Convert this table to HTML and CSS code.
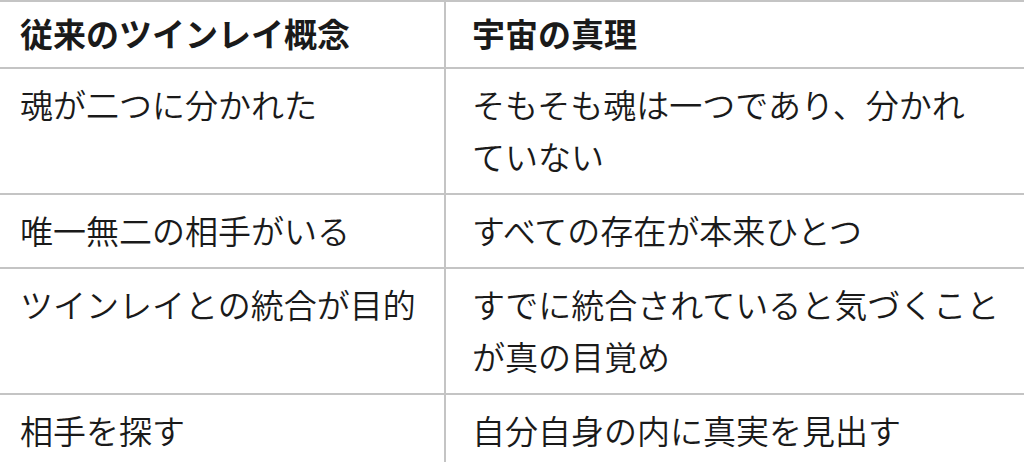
FILE: index.html
```html
<!DOCTYPE html>
<html lang="ja">
<head>
<meta charset="utf-8">
<title>ツインレイ概念</title>
<link rel="stylesheet" href="styles.css">
</head>
<body>
<div class="table">
  <div class="cell head left">従来のツインレイ概念</div>
  <div class="cell head right">宇宙の真理</div>

  <div class="cell left">魂が二つに分かれた</div>
  <div class="cell right">そもそも魂は一つであり、分かれ<br>ていない</div>

  <div class="cell left">唯一無二の相手がいる</div>
  <div class="cell right">すべての存在が本来ひとつ</div>

  <div class="cell left">ツインレイとの統合が目的</div>
  <div class="cell right">すでに統合されていると気づくこと<br>が真の目覚め</div>

  <div class="cell left">相手を探す</div>
  <div class="cell right">自分自身の内に真実を見出す</div>
</div>
</body>
</html>
```

FILE: styles.css
```css
html, body {
  margin: 0;
  padding: 0;
  background: #ffffff;
}

body {
  font-family: "Noto Sans CJK JP", "Noto Sans", sans-serif;
  color: #1a1a1a;
  overflow: hidden;
}

.table {
  display: grid;
  grid-template-columns: 446px 1fr;
  width: 1024px;
  border-top: 2px solid #c4c4c4;
}

.cell {
  font-size: 33px;
  font-weight: 350;
  line-height: 52px;
  padding: 9px 0 11px;
  border-bottom: 2px solid #c4c4c4;
  white-space: nowrap;
}

.left {
  padding-left: 20px;
  border-right: 2px solid #c4c4c4;
}

.right {
  padding-left: 26px;
}

.head {
  font-weight: 700;
  padding-top: 5px;
  padding-bottom: 8px;
}
```
